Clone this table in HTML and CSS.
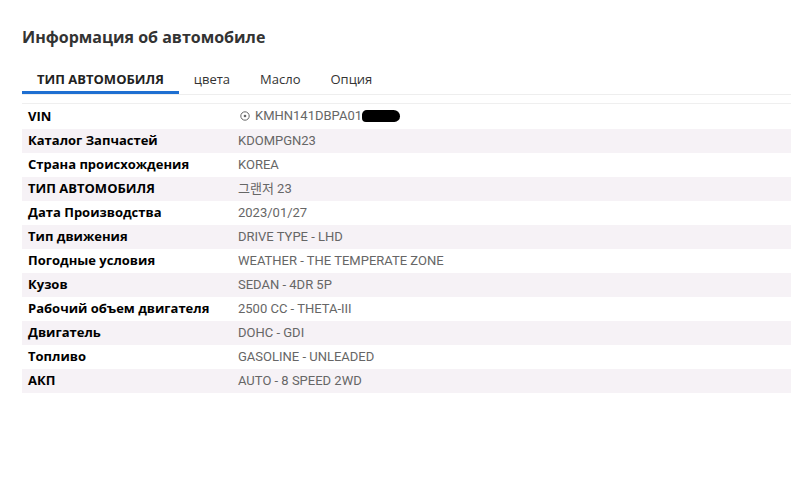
FILE: index.html
```html
<!DOCTYPE html>
<html lang="ru">
<head>
<meta charset="utf-8">
<link rel="stylesheet" href="styles.css">
</head>
<body>
<div class="page">
  <h1 class="title">Информация об автомобиле</h1>
  <div class="tabs">
    <div class="tab active">ТИП АВТОМОБИЛЯ</div>
    <div class="tab">цвета</div>
    <div class="tab">Масло</div>
    <div class="tab">Опция</div>
  </div>
  <table class="info">
    <tr><th>VIN</th><td><span class="vin"><svg class="vin-icon" width="10" height="10" viewBox="0 0 10 10"><circle cx="5" cy="5" r="4.2" fill="none" stroke="#666" stroke-width="1"/><circle cx="5" cy="5" r="1.3" fill="#666"/></svg>KMHN141DBPA01<span class="redact"></span></span></td></tr>
    <tr><th>Каталог Запчастей</th><td>KDOMPGN23</td></tr>
    <tr><th>Страна происхождения</th><td>KOREA</td></tr>
    <tr><th>ТИП АВТОМОБИЛЯ</th><td>그랜저 23</td></tr>
    <tr><th>Дата Производства</th><td>2023/01/27</td></tr>
    <tr><th>Тип движения</th><td>DRIVE TYPE - LHD</td></tr>
    <tr><th>Погодные условия</th><td>WEATHER - THE TEMPERATE ZONE</td></tr>
    <tr><th>Кузов</th><td>SEDAN - 4DR 5P</td></tr>
    <tr><th>Рабочий объем двигателя</th><td>2500 CC - THETA-III</td></tr>
    <tr><th>Двигатель</th><td>DOHC - GDI</td></tr>
    <tr><th>Топливо</th><td>GASOLINE - UNLEADED</td></tr>
    <tr><th>АКП</th><td>AUTO - 8 SPEED 2WD</td></tr>
  </table>
</div>
</body>
</html>
```
FILE: styles.css
```css
html, body {
  margin: 0;
  padding: 0;
  background: #fff;
}
.page {
  padding: 26px 0 0 22px;
  font-family: "Open Sans", "Noto Sans CJK KR", sans-serif;
  color: #222;
}
.title {
  margin: 0;
  font-size: 16px;
  font-weight: 700;
  line-height: 22px;
  color: #333;
}
.tabs {
  display: flex;
  margin-top: 16px;
  border-bottom: 1px solid #eeeeee;
}
.tab {
  box-sizing: border-box;
  height: 30px;
  padding: 2px 15px 0;
  font-size: 13px;
  line-height: 26px;
  color: #333;
}
.tab.active {
  font-weight: 700;
  color: #222;
  border-bottom: 3px solid #1e6fd1;
}
.info {
  margin-top: 8px;
  width: 100%;
  border-collapse: collapse;
  border-top: 1px solid #efefef;
}
.info tr {
  height: 24px;
}
.info tr:nth-child(even) {
  background: #f6f2f6;
}
.info th {
  text-align: left;
  font-weight: 700;
  font-size: 13px;
  color: #000;
  width: 210px;
  padding: 0 0 1px 6px;
  line-height: 23px;
}
.info td {
  font-family: "Roboto", "Noto Sans CJK KR", sans-serif;
  font-size: 13px;
  color: #666;
  padding: 0;
  line-height: 24px;
}
.vin {
  display: inline-flex;
  align-items: center;
}
.vin-icon {
  margin: 0 5px 0 2px;
}
.redact {
  display: inline-block;
  width: 38px;
  height: 12px;
  background: #000;
  border-radius: 6px 8px 7px 5px;
  margin-left: 0;
}
```
